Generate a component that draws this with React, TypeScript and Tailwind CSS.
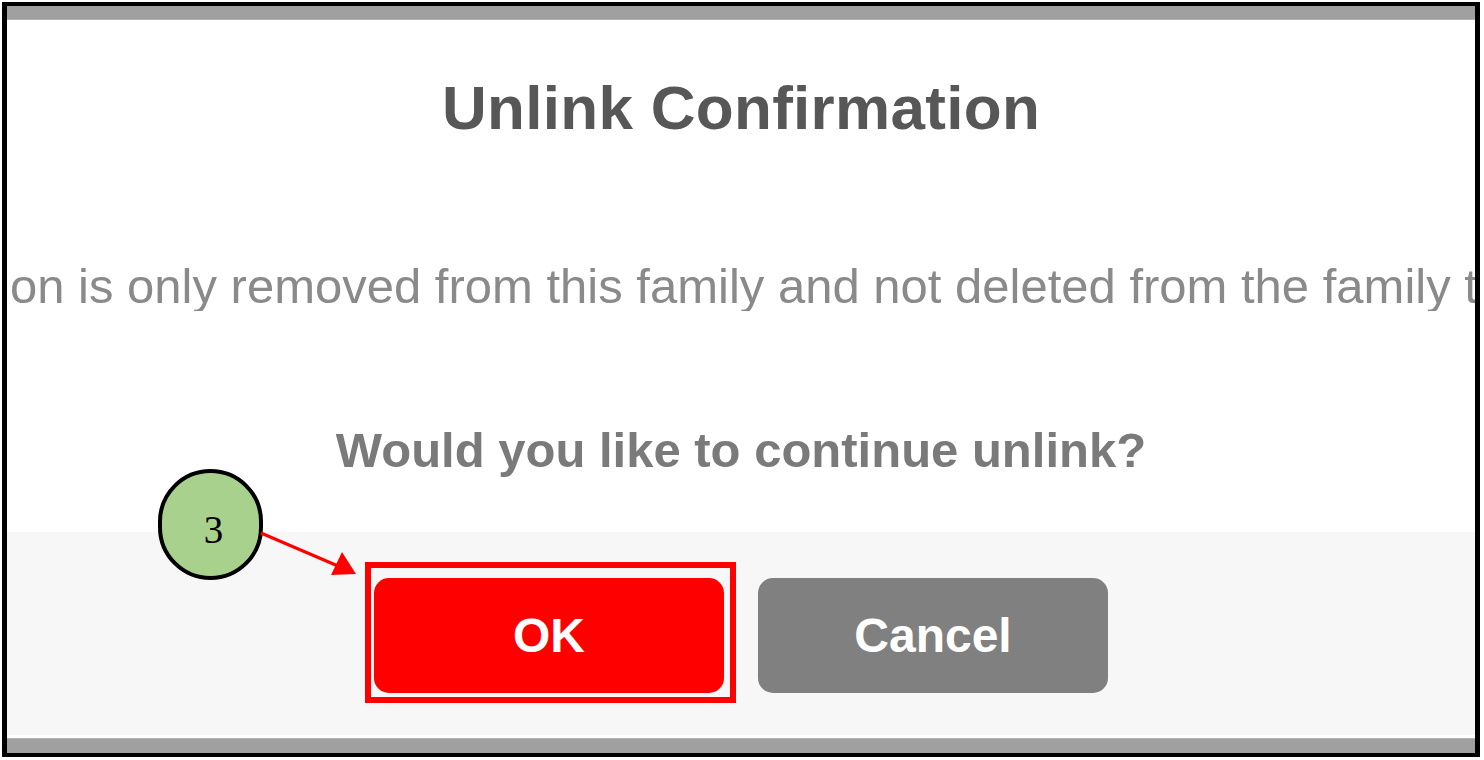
import React from "react";

export default function App() {
  return (
    <div className="relative w-[1484px] h-[760px] bg-white overflow-hidden" style={{ fontFamily: '"Liberation Sans", Arial, sans-serif' }}>
      <div className="ml-[2px] mt-[2px] w-[1478px] h-[755px] border-black border-l-[5px] border-r-[5px] border-t-[4px] border-b-[4px] flex flex-col overflow-hidden">
        <div className="h-[14px] bg-[#a0a0a0] border-b border-[#b4b4b4]" />
        <div className="h-[512px] bg-white flex flex-col items-center pt-[57px] overflow-hidden">
          <h1 className="text-[62px] leading-none font-bold text-[#575757] whitespace-nowrap tracking-[0.3px]">Unlink Confirmation</h1>
          <div className="w-full mt-[123px] overflow-hidden">
            <p className="text-[49px] leading-none text-[#8a8a8a] whitespace-nowrap pl-[3px]">
              on is only removed from this family and not deleted from the family tree.
            </p>
          </div>
          <p className="mt-[115px] text-[49px] leading-none font-bold text-[#7a7a7a] whitespace-nowrap">Would you like to continue unlink?</p>
        </div>
        <div className="h-[203px] bg-[#f7f7f7] flex justify-center items-start pt-[46px] gap-[34px]">
          <button className="w-[350px] h-[115px] rounded-[15px] bg-[#ff0000] text-white text-[48px] font-bold flex items-center justify-center leading-none">OK</button>
          <button className="w-[350px] h-[115px] rounded-[15px] bg-[#808080] text-white text-[48px] font-bold flex items-center justify-center leading-none">Cancel</button>
        </div>
        <div className="h-[3px] bg-white" />
        <div className="flex-1 bg-[#a0a0a0] border-t border-[#b4b4b4]" />
      </div>

      {/* annotation: red frame */}
      <div className="absolute left-[365px] top-[562px] w-[371px] h-[141px] border-[6px] border-[#ff0000]" />

      {/* annotation: numbered circle */}
      <div className="absolute left-[158px] top-[469px] w-[105px] h-[111px] rounded-full border-[4px] border-black bg-[#a9d18e] flex items-center justify-center">
        <span className="text-[39px] leading-none text-black pl-[6px] pt-[10px]" style={{ fontFamily: '"Liberation Serif", "Times New Roman", serif' }}>3</span>
      </div>

      {/* annotation: arrow */}
      <svg className="absolute left-0 top-0 pointer-events-none" width="1484" height="760" viewBox="0 0 1484 760">
        <line x1="261" y1="533" x2="338" y2="566" stroke="#ff0000" strokeWidth="3" />
        <polygon points="356,574 331,575 342,552" fill="#ff0000" />
      </svg>
    </div>
  );
}
